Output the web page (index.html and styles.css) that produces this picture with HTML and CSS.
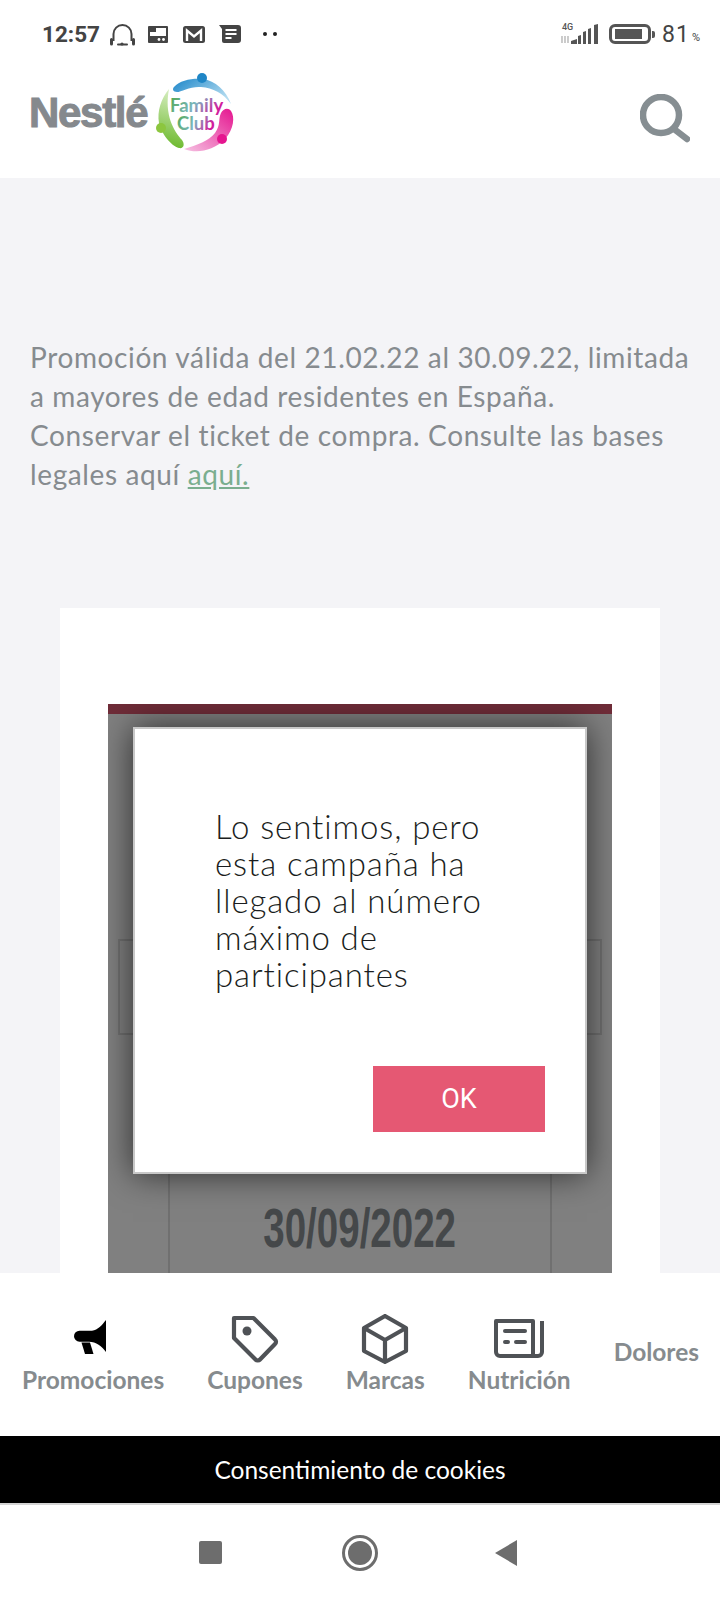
FILE: index.html
```html
<!DOCTYPE html>
<html lang="es">
<head>
    <meta charset="UTF-8">
    <meta name="viewport" content="width=device-width, initial-scale=1.0">
    <title>Nestlé Family Club</title>
    <link rel="stylesheet" href="styles.css">
</head>
<body>
    <div class="page">
        <div class="status-bar">
            <div class="status-left">
                <span class="clock">12:57</span>
                <svg class="st-icon headset" viewBox="0 0 25 23" fill="none" stroke="#444" stroke-width="2">
                    <path d="M3.500 18V11a9 9 0 0 1 18 0v7"/>
                    <path d="M1.500 16.500v4.500M23.500 16.500v4.500" stroke-width="3" stroke-linecap="round"/>
                    <path d="M8 21.500h9" stroke-linecap="round"/>
                    <circle cx="12" cy="21" r="1.600" fill="#444" stroke="none"/>
                </svg>
                <svg class="st-icon floppy" viewBox="0 0 20 17">
                    <path fill="#444" fill-rule="evenodd" d="M1 0h18a1 1 0 0 1 1 1v15a1 1 0 0 1-1 1H1a1 1 0 0 1-1-1V1a1 1 0 0 1 1-1zM2 6v4h16V2H8v4z"/>
                    <circle cx="11" cy="13.500" r="1.400" fill="#fff"/>
                    <circle cx="15.500" cy="13.500" r="1.400" fill="#fff"/>
                </svg>
                <svg class="st-icon mail" viewBox="0 0 22 17">
                    <rect width="22" height="17" rx="2.500" fill="#444"/>
                    <path d="M4 15V4.500l7 6 7-6V15" fill="none" stroke="#fff" stroke-width="2.400"/>
                </svg>
                <svg class="st-icon memo" viewBox="0 0 22 18">
                    <path fill="#444" d="M0 0h19a3 3 0 0 1 3 3v12a3 3 0 0 1-3 3H5a2 2 0 0 1-2-2V4z"/>
                    <path d="M6.500 5h11M6.500 9h11M6.500 13h6" stroke="#fff" stroke-width="2"/>
                </svg>
                <span class="dots"><i></i><i></i></span>
            </div>
            <div class="status-right">
                <svg class="signal" viewBox="0 0 38 24">
                    <text x="2" y="8" class="net-text">4G</text>
                    <path d="M2 14v7M5 21v-7M8 14v7" stroke="#aaa" stroke-width="1.200" fill="none"/>
                    <path fill="#555" d="M11 22v-3l6-2v5zM18 22v-8l3-1v9zM23 22V10l3-1v13zM28 22V7l3-1v16zM34 22V3l4-1v20z"/>
                </svg>
                <div class="battery"><div class="battery-fill"></div></div>
                <span class="battery-tip"></span>
                <span class="pct">81</span>
                <span class="pct-sign">%</span>
            </div>
        </div>

        <header class="header">
            <div class="logo">
                <span class="logo-word">Nestlé</span>
                <svg class="logo-ring" viewBox="0 0 78 82">
                    <defs>
                        <linearGradient id="blueArc" x1="0" y1="0" x2="1" y2="0.6">
                            <stop offset="0" stop-color="#1c86c9"/>
                            <stop offset="1" stop-color="#b4dcf0"/>
                        </linearGradient>
                        <linearGradient id="greenArc" x1="0.6" y1="0" x2="0.5" y2="1">
                            <stop offset="0" stop-color="#d9efc4"/>
                            <stop offset="1" stop-color="#6cb92d"/>
                        </linearGradient>
                        <linearGradient id="pinkArc" x1="1" y1="0" x2="0" y2="1">
                            <stop offset="0" stop-color="#e5158f"/>
                            <stop offset="1" stop-color="#f6c3e3"/>
                        </linearGradient>
                        <linearGradient id="wordFill" x1="0" y1="0" x2="1" y2="0.3">
                            <stop offset="0" stop-color="#4fa84a"/>
                            <stop offset="0.55" stop-color="#7cb6c0"/>
                            <stop offset="1" stop-color="#d01f9c"/>
                        </linearGradient>
                    </defs>
                    <path fill="url(#blueArc)" d="M17 14C23 7 36 5 46 6 58 8 69 17 74 31 66 20 56 15 44 14 34 13 24 19 20 19 16 19 15 16 17 14z"/>
                    <circle cx="45" cy="5" r="5" fill="#1f86c6"/>
                    <path fill="url(#greenArc)" d="M12 16C4 26 0 38 2 50 4 60 14 73 22 75 27 76 28 71 25 67 17 58 7 42 12 16z"/>
                    <circle cx="4" cy="55" r="5" fill="#8cc63f"/>
                    <path fill="url(#pinkArc)" d="M64 40C61 46 64 52 58 60 52 68 40 72 27 76 40 81 56 78 68 66 77 56 78 44 74 38 71 34 66 36 64 40z"/>
                    <circle cx="65" cy="66" r="5" fill="#e5158f"/>
                    <text x="13" y="39" class="ring-word">Family</text>
                    <text x="20" y="57" class="ring-word">Club</text>
                </svg>
            </div>
            <svg class="search" viewBox="0 0 50 50" fill="none" stroke="#868e92">
                <circle cx="21" cy="21" r="18" stroke-width="6.500"/>
                <path d="M34 35l13 10" stroke-width="6.500" stroke-linecap="round"/>
            </svg>
        </header>

        <main class="content">
            <p class="legal">
                Promoción válida del 21.02.22 al 30.09.22, limitada a mayores de edad residentes en España.<br>
                Conservar el ticket de compra. Consulte las bases legales aquí <a href="#">aquí.</a>
            </p>
            <div class="card">
                <div class="promo">
                    <div class="promo-strip"></div>
                    <div class="promo-box"></div>
                    <div class="promo-date">
                        <span>30/09/2022</span>
                    </div>
                    <div class="dialog">
                        <p class="dialog-text">Lo sentimos, pero esta campaña ha llegado al número máximo de participantes</p>
                        <button class="dialog-btn">OK</button>
                    </div>
                </div>
            </div>
        </main>

        <nav class="tabs">
            <div class="tab">
                <svg class="tab-icon icon-promo" width="32" height="34" viewBox="0 0 32 34">
                    <path fill="#000" d="M32 0V32C28 26 22 21.700 15 21.700H5.500A5.500 5.500 0 0 1 5.500 10.700H18C24 10 28 5 32 0z"/>
                    <path fill="#000" d="M7.500 22.500H16L19.500 34H11z"/>
                </svg>
                <span>Promociones</span>
            </div>
            <div class="tab">
                <svg class="tab-icon" width="50" height="50" viewBox="0 0 50 50" fill="none" stroke="#4f5256" stroke-width="4.200" stroke-linejoin="round">
                    <path d="M4 4H23.500L45 25.500a3 3 0 0 1 0 4.500L30 45.500a3 3 0 0 1-4.500 0L4 24z"/>
                    <circle cx="17" cy="17" r="4.500" fill="#4f5256" stroke="none"/>
                </svg>
                <span>Cupones</span>
            </div>
            <div class="tab">
                <svg class="tab-icon" width="50" height="50" viewBox="0 0 50 50" fill="none" stroke="#4f5256" stroke-width="4.200" stroke-linejoin="round">
                    <path d="M25 2l21 12v23L25 48 4 37V14z"/>
                    <path d="M4 14l21 12 21-12M25 26v22"/>
                </svg>
                <span>Marcas</span>
            </div>
            <div class="tab">
                <svg class="tab-icon icon-nutri" width="50" height="40" viewBox="0 0 50 40" fill="none" stroke="#4f5256" stroke-width="4" stroke-linejoin="round">
                    <path d="M2 3H39V38H6a4 4 0 0 1-4-4z"/>
                    <path d="M39 38H44a4 4 0 0 0 4-4V3"/>
                    <path d="M11 13H31" stroke-linecap="round"/>
                    <path d="M11 24h3M22 24h9" stroke-linecap="round"/>
                </svg>
                <span>Nutrición</span>
            </div>
            <div class="tab tab-text">
                <span>Dolores</span>
            </div>
        </nav>

        <div class="cookies">Consentimiento de cookies</div>

        <div class="sys-nav">
            <span class="sys-square"></span>
            <span class="sys-circle"><i></i></span>
            <span class="sys-back"></span>
        </div>
    </div>
</body>
</html>
```

FILE: styles.css
```css
body {
    margin: 0;
    padding: 0;
    background-color: #fff;
    font-family: Lato, "Open Sans", sans-serif;
}
.page {
    width: 720px;
    height: 1600px;
    display: flex;
    flex-direction: column;
    overflow: hidden;
}

/* status bar */
.status-bar {
    height: 60px;
    flex: none;
    display: flex;
    justify-content: space-between;
    align-items: center;
    padding: 8px 20px 0 42px;
    box-sizing: border-box;
}
.status-left {
    display: flex;
    align-items: center;
}
.clock {
    width: 56px;
    font-family: Roboto, sans-serif;
    font-weight: 700;
    font-size: 22.500px;
    color: #444;
    margin-right: 12px;
}
.st-icon {
    display: block;
}
.headset {
    width: 25px;
    height: 23px;
    margin-right: 13px;
}
.floppy {
    width: 20px;
    height: 17px;
    margin-right: 15px;
}
.mail {
    width: 22px;
    height: 17px;
    margin-right: 14px;
}
.memo {
    width: 22px;
    height: 18px;
    margin-right: 22px;
}
.dots {
    display: flex;
    gap: 6px;
}
.dots i {
    width: 4px;
    height: 4px;
    border-radius: 50%;
    background: #222;
}
.status-right {
    display: flex;
    align-items: center;
}
.signal {
    width: 38px;
    height: 24px;
    margin-right: 11px;
}
.net-text {
    font-family: Roboto, sans-serif;
    font-size: 9px;
    font-weight: 500;
    fill: #555;
}
.battery {
    width: 42px;
    height: 20px;
    box-sizing: border-box;
    border: 3px solid #555;
    border-radius: 6px;
    padding: 2px 3px;
}
.battery-fill {
    width: 27px;
    height: 100%;
    background: #555;
}
.battery-tip {
    width: 3px;
    height: 7px;
    background: #555;
    margin-left: 1px;
    margin-right: 7px;
    border-radius: 0 2px 2px 0;
}
.pct {
    font-family: Roboto, sans-serif;
    font-size: 23px;
    letter-spacing: 1px;
    color: #444;
}
.pct-sign {
    font-family: Roboto, sans-serif;
    font-size: 11px;
    color: #444;
    margin-left: 2px;
    margin-top: 6px;
}

/* header */
.header {
    height: 118px;
    flex: none;
    display: flex;
    justify-content: space-between;
    align-items: center;
    padding: 0 30px 0 29px;
    box-sizing: border-box;
}
.logo {
    display: flex;
    align-items: center;
    gap: 10px;
    margin-bottom: 10px;
}
.logo-word {
    font-family: "Liberation Sans", sans-serif;
    font-weight: 700;
    font-size: 42px;
    letter-spacing: -1.300px;
    color: #85898d;
    -webkit-text-stroke: 1px #85898d;
    margin-bottom: 2px;
}
.logo-ring {
    width: 78px;
    height: 82px;
    overflow: visible;
}
.ring-word {
    font-family: Lato, sans-serif;
    font-weight: 700;
    font-size: 18.500px;
    fill: url(#wordFill);
}
.search {
    width: 50px;
    height: 50px;
}

/* main area */
.content {
    flex: 1;
    min-height: 0;
    overflow: hidden;
    background-color: #f4f4f7;
}
.legal {
    margin: 160px 30px 0;
    font-size: 28px;
    letter-spacing: 0.620px;
    line-height: 39px;
    color: #868b8f;
}
.legal a {
    color: #7aae8f;
}
.card {
    margin: 114px 60px 0;
    background: #fff;
    padding: 96px 48px 0;
    height: 800px;
}
.promo {
    position: relative;
    height: 700px;
    background: #808080;
    overflow: hidden;
}
.promo-strip {
    height: 10px;
    background: #6f2c38;
}
.promo-box {
    margin: 225px 10px 0;
    height: 96px;
    box-sizing: border-box;
    border: 2px solid #707070;
}
.promo-date {
    margin: 0 60px;
    padding-top: 163px;
    height: 300px;
    border-left: 2px solid #707070;
    border-right: 2px solid #707070;
    text-align: center;
}
.promo-date span {
    display: inline-block;
    font-family: "Liberation Sans", sans-serif;
    font-weight: 700;
    font-size: 55px;
    line-height: 60px;
    color: #45484a;
    transform: scaleX(0.7);
}
.dialog {
    position: absolute;
    top: 23px;
    left: 25px;
    width: 454px;
    height: 447px;
    box-sizing: border-box;
    background: #fff;
    border: 2px solid #c8c8c8;
    box-shadow: 0 0 32px rgba(0, 0, 0, 0.65);
    padding: 79px 80px 0 80px;
}
.dialog-text {
    margin: 0;
    font-family: Lato, sans-serif;
    font-weight: 300;
    font-size: 33px;
    letter-spacing: 0.900px;
    line-height: 37px;
    color: #1a1d20;
}
.dialog-btn {
    position: absolute;
    left: 238px;
    top: 337px;
    width: 172px;
    height: 66px;
    background-color: #e55873;
    color: #fff;
    border: none;
    font-family: Roboto, sans-serif;
    font-size: 27px;
}

/* bottom tabs */
.tabs {
    height: 163px;
    flex: none;
    background: #fff;
    display: flex;
    gap: 43px;
    padding-left: 22px;
    box-sizing: border-box;
}
.tab {
    display: flex;
    flex-direction: column;
    align-items: center;
    justify-content: flex-end;
    height: 122px;
    font-weight: 700;
    font-size: 24.500px;
    line-height: 30px;
    color: #868b8e;
}
.tab-icon {
    display: block;
    margin-bottom: 1px;
}
.icon-promo {
    margin: 0 6px 11px 0;
}
.icon-nutri {
    margin-bottom: 7px;
}
.tab-text {
    justify-content: center;
    padding-top: 30px;
    height: 98px;
}

/* cookie bar */
.cookies {
    height: 69px;
    flex: none;
    box-sizing: border-box;
    background: #000;
    border-bottom: 2px solid #d4d4d4;
    color: #fff;
    font-size: 24.500px;
    line-height: 67px;
    text-align: center;
}

/* android nav */
.sys-nav {
    height: 95px;
    flex: none;
    background: #fff;
    display: flex;
    align-items: center;
    padding-left: 199px;
}
.sys-square {
    width: 23px;
    height: 23px;
    border-radius: 2px;
    background: #6d6d6d;
}
.sys-circle {
    margin-left: 120px;
    width: 36px;
    height: 36px;
    box-sizing: border-box;
    border: 3px solid #6d6d6d;
    border-radius: 50%;
    padding: 3px;
}
.sys-circle i {
    display: block;
    width: 24px;
    height: 24px;
    border-radius: 50%;
    background: #6d6d6d;
}
.sys-back {
    margin-left: 117px;
    width: 0;
    height: 0;
    border-top: 13px solid transparent;
    border-bottom: 13px solid transparent;
    border-right: 22px solid #6d6d6d;
}
```
